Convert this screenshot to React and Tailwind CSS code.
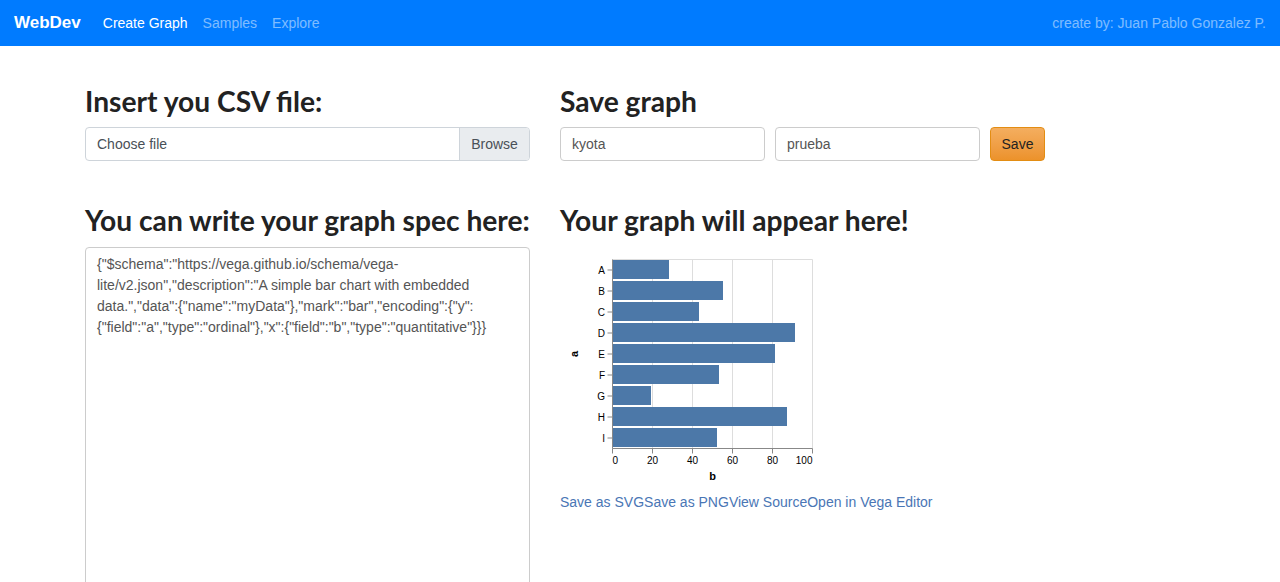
const data = [
  ["A", 28],
  ["B", 55],
  ["C", 43],
  ["D", 91],
  ["E", 81],
  ["F", 53],
  ["G", 19],
  ["H", 87],
  ["I", 52],
];

const specLines = [
  '{"$schema":"https://vega.github.io/schema/vega-',
  'lite/v2.json","description":"A simple bar chart with embedded',
  'data.","data":{"name":"myData"},"mark":"bar","encoding":{"y":',
  '{"field":"a","type":"ordinal"},"x":{"field":"b","type":"quantitative"}}}',
];

function BarChart() {
  const ticks = [0, 20, 40, 60, 80, 100];
  return (
    <svg width="260" height="240" viewBox="0 0 260 240" className="block" style={{ fontFamily: '"Liberation Sans", Arial, sans-serif' }}>
      {/* grid */}
      <line x1="52.5" y1="9.5" x2="252.5" y2="9.5" stroke="#ddd" />
      {ticks.map((t) => (
        <line key={"g" + t} x1={52.5 + t * 2} y1="9.5" x2={52.5 + t * 2} y2="198.5" stroke="#ddd" />
      ))}
      {/* bars */}
      {data.map(([k, v], i) => (
        <rect key={k} x="53" y={10 + i * 21} width={v * 2} height="19" fill="#4c78a8" />
      ))}
      {/* y axis */}
      <line x1="52.5" y1="9.5" x2="52.5" y2="198.5" stroke="#888" />
      {data.map(([k], i) => (
        <g key={"y" + k}>
          <line x1="47.5" y1={20 + i * 21} x2="52.5" y2={20 + i * 21} stroke="#888" />
          <text x="45" y={23.5 + i * 21} fontSize="10" textAnchor="end" fill="#000">
            {k}
          </text>
        </g>
      ))}
      <text x="17.5" y="104" fontSize="11" fontWeight="bold" textAnchor="middle" transform="rotate(-90 17.5 104)" fill="#000">
        a
      </text>
      {/* x axis */}
      <line x1="52.5" y1="198.5" x2="252.5" y2="198.5" stroke="#888" />
      {ticks.map((t, i) => (
        <g key={"x" + t}>
          <line x1={52.5 + t * 2} y1="198.5" x2={52.5 + t * 2} y2="203.5" stroke="#888" />
          <text
            x={52.5 + t * 2}
            y="213.5"
            fontSize="10"
            textAnchor={i === 0 ? "start" : i === ticks.length - 1 ? "end" : "middle"}
            fill="#000">
            {t}
          </text>
        </g>
      ))}
      <text x="152.5" y="229.5" fontSize="11" fontWeight="bold" textAnchor="middle" fill="#000">
        b
      </text>
    </svg>
  );
}

function App() {
  return (
    <div className="min-h-screen bg-white text-[14px] text-[#333]" style={{ fontFamily: '"Liberation Sans", Helvetica, Arial, sans-serif' }}>
      <nav className="h-[46px] bg-[#007bff] flex items-center px-[14px]">
        <span className="text-[17px] font-bold text-white">WebDev</span>
        <div className="flex items-center gap-[15px] ml-[22px]">
          <span className="text-white">Create Graph</span>
          <span className="text-white/50">Samples</span>
          <span className="text-white/50">Explore</span>
        </div>
        <span className="ml-auto text-white/50">create by: Juan Pablo Gonzalez P.</span>
      </nav>

      <main className="w-[1110px] mx-auto pt-[39px]">
        <div className="flex gap-[30px]">
          <section className="w-[445px]">
            <h2 className="text-[28.2px] leading-[33px] font-bold text-[#222] mb-[9px] whitespace-nowrap" style={{ fontFamily: "Lato, sans-serif" }}>
              Insert you CSV file:
            </h2>
            <div className="flex h-[34px] border border-[#ced4da] rounded-[4px] overflow-hidden text-[#495057]">
              <div className="flex-1 flex items-center px-[11px]">Choose file</div>
              <div className="w-[70px] flex items-center justify-center bg-[#e9ecef] border-l border-[#ced4da]">Browse</div>
            </div>
          </section>
          <section className="flex-1">
            <h2 className="text-[28.2px] leading-[33px] font-bold text-[#222] mb-[9px] whitespace-nowrap" style={{ fontFamily: "Lato, sans-serif" }}>
              Save graph
            </h2>
            <div className="flex gap-[10px] text-[#555]">
              <div className="w-[205px] h-[34px] border border-[#ccc] rounded-[4px] flex items-center px-[11px]">kyota</div>
              <div className="w-[205px] h-[34px] border border-[#ccc] rounded-[4px] flex items-center px-[11px]">prueba</div>
              <button className="w-[55px] h-[34px] rounded-[4px] border border-[#e38d13] bg-gradient-to-b from-[#f4ae5f] to-[#ec922a] text-[#222]">
                Save
              </button>
            </div>
          </section>
        </div>

        <div className="flex gap-[30px] mt-[43px]">
          <section className="w-[445px]">
            <h2 className="text-[28.2px] leading-[33px] font-bold text-[#222] mb-[10px] whitespace-nowrap" style={{ fontFamily: "Lato, sans-serif" }}>
              You can write your graph spec here:
            </h2>
            <div className="h-[380px] border border-[#ccc] rounded-[4px] px-[11px] py-[6px] text-[#555] leading-[21px]">
              {specLines.map((l) => (
                <div key={l} className="whitespace-nowrap">
                  {l}
                </div>
              ))}
            </div>
          </section>
          <section className="flex-1">
            <h2 className="text-[28.2px] leading-[33px] font-bold text-[#222] mb-[10px] whitespace-nowrap" style={{ fontFamily: "Lato, sans-serif" }}>
              Your graph will appear here!
            </h2>
            <div className="pt-[3px]">
              <BarChart />
            </div>
            <div className="mt-[2px] leading-[20px] text-[#4a76b5]">
              <span>Save as SVG</span>
              <span>Save as PNG</span>
              <span>View Source</span>
              <span>Open in Vega Editor</span>
            </div>
          </section>
        </div>
      </main>
    </div>
  );
}

export default App;
